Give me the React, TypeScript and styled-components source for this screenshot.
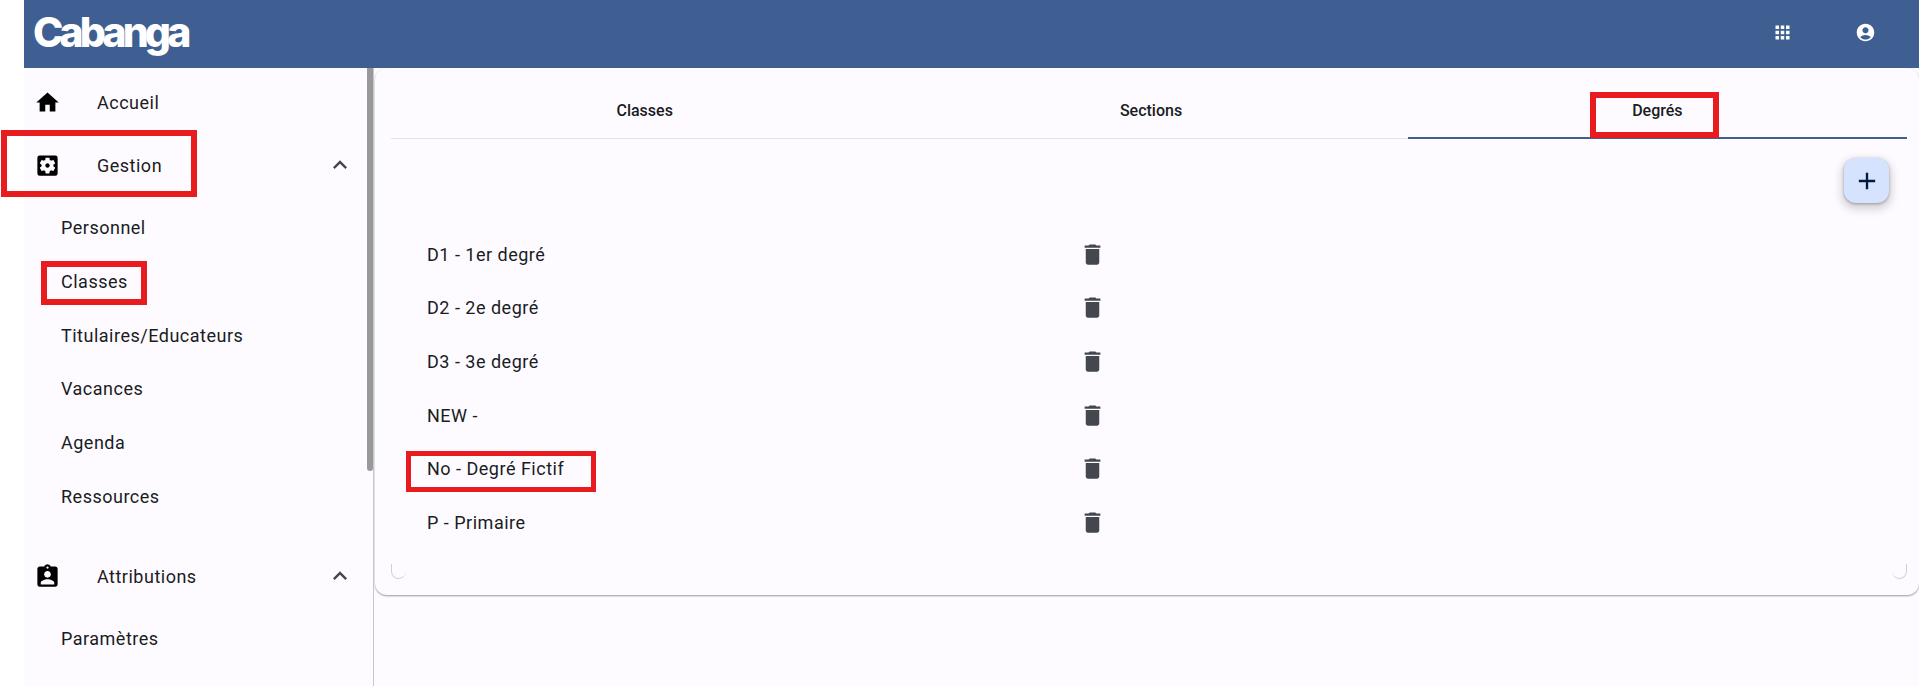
import React from "react";
import styled, { createGlobalStyle } from "styled-components";
import { MdHome, MdSettingsApplications, MdAssignmentInd, MdApps, MdAccountCircle, MdDelete, MdExpandLess, MdAdd } from "react-icons/md";

const Global = createGlobalStyle`
  html, body { margin: 0; padding: 0; background: #fff; height: 686px; overflow: hidden; }
  body { font-family: Roboto, "Liberation Sans", sans-serif; }
  * { box-sizing: border-box; }
`;
const Page = styled.div`
  position: relative; width: 1919px; height: 686px; padding-left: 24px; overflow: hidden;
  display: flex; flex-direction: column;
`;
const Header = styled.header`
  height: 68px; flex: none; background: #3f5f92; display: flex; align-items: center; padding-left: 9px; color: #fff;
`;
const Logo = styled.div`
  font-family: Inter, sans-serif; font-weight: 800; font-size: 41px; letter-spacing: -3.9px; line-height: 68px; margin-top: -5px;
`;
const HeaderIcons = styled.div`
  margin-left: auto; display: flex; align-items: center; gap: 62px; padding-right: 43px; margin-top: -4px;
  svg { display: block; width: 21px; height: 21px; }
`;
const Body = styled.div`
  flex: 1; display: flex; min-height: 0; background: #fdfbff;
`;
const Sidebar = styled.nav`
  position: relative; width: 350px; flex: none; border-right: 1px solid #c4c6cf; padding-top: 3.5px; overflow: hidden; color: #1a1c1e;
`;
const Thumb = styled.div`
  position: absolute; right: 0; top: 0; width: 6px; height: 403px; background: #999; border-radius: 0 0 3px 3px;
`;
const MainItem = styled.div`
  height: 62.6px; display: flex; align-items: center; padding-left: 10px; font-size: 18px; letter-spacing: .5px;
  & > svg:first-child { width: 27px; height: 27px; color: #000; margin-right: 36px; flex: none; }
`;
const Chevron = styled(MdExpandLess)`
  margin-left: auto; margin-right: 19px; width: 28px; height: 28px; color: #44474e;
`;
const SubList = styled.div<{ $after?: number }>`
  margin-top: 4.4px; margin-bottom: ${p => p.$after ?? 0}px;
`;
const SubItem = styled.div`
  height: 53.7px; display: flex; align-items: center; padding-left: 37px; font-size: 18px; letter-spacing: .5px;
`;
const Main = styled.main`
  flex: 1; min-width: 0; padding-right: 0;
`;
const Card = styled.section`
  height: 527px; margin-left: 1px; border-radius: 12px; background: #fdfbff; padding: 0 12px 16px 16px;
  box-shadow: 0 1px 2px rgba(0,0,0,.4);
  display: flex; flex-direction: column;
`;
const Tabs = styled.div`
  height: 71px; flex: none; display: grid; grid-template-columns: repeat(3, 1fr); column-gap: 7px; padding-left: 4px;
  border-bottom: 1px solid #e0e2ec;
`;
const Tab = styled.div<{ $active?: boolean }>`
  display: flex; align-items: center; justify-content: center; height: 71px; padding-top: 16px;
  font-size: 16px; font-weight: 500; color: #1a1c1e;
  border-bottom: 2px solid ${p => (p.$active ? "#3f5f92" : "transparent")};
`;
const Panel = styled.div`
  flex: 1; border-radius: 12px; position: relative; padding: 87.5px 35px 0;
  border: 1px solid transparent;
  &::before, &::after { content: ""; position: absolute; bottom: -1px; width: 14px; height: 14px; border-bottom: 1px solid #cfd0d6; border-radius: 0 0 12px 12px; }
  &::before { left: -1px; border-left: 1px solid #cfd0d6; }
  &::after { right: -1px; border-right: 1px solid #cfd0d6; }
`;
const Fab = styled.button`
  position: absolute; top: 18px; right: 17px; width: 45px; height: 45px; border: 0; padding: 0; border-radius: 12px;
  background: #d6e3ff; color: #001b3e; display: flex; align-items: center; justify-content: center;
  box-shadow: 0 4px 8px 3px rgba(0,0,0,.15), 0 1px 3px rgba(0,0,0,.3);
  svg { width: 28px; height: 28px; }
`;
const Row = styled.div`
  height: 53.6px; display: grid; grid-template-columns: 652px 27px; align-items: center;
  font-size: 18px; letter-spacing: .5px; color: #1a1c1e;
  svg { width: 27px; height: 27px; color: #44474e; display: block; }
`;
const Mark = styled.div<{ $x: number; $y: number; $w: number; $h: number; $b: number }>`
  position: absolute; left: ${p => p.$x}px; top: ${p => p.$y}px; width: ${p => p.$w}px; height: ${p => p.$h}px;
  border: ${p => p.$b}px solid #e81c1f; pointer-events: none;
`;

const subs1 = ["Personnel", "Classes", "Titulaires/Educateurs", "Vacances", "Agenda", "Ressources"];
const rows = ["D1 - 1er degré", "D2 - 2e degré", "D3 - 3e degré", "NEW -", "No - Degré Fictif", "P - Primaire"];

export default function App() {
  return (
    <Page>
      <Global />
      <Header>
        <Logo>Cabanga</Logo>
        <HeaderIcons><MdApps /><MdAccountCircle /></HeaderIcons>
      </Header>
      <Body>
        <Sidebar>
          <Thumb />
          <MainItem><MdHome />Accueil</MainItem>
          <MainItem><MdSettingsApplications />Gestion<Chevron /></MainItem>
          <SubList $after={21.6}>{subs1.map(s => <SubItem key={s}>{s}</SubItem>)}</SubList>
          <MainItem><MdAssignmentInd />Attributions<Chevron /></MainItem>
          <SubList><SubItem>Paramètres</SubItem></SubList>
        </Sidebar>
        <Main>
          <Card>
            <Tabs>
              <Tab>Classes</Tab>
              <Tab>Sections</Tab>
              <Tab $active>Degrés</Tab>
            </Tabs>
            <Panel>
              <Fab aria-label="Ajouter"><MdAdd /></Fab>
              {rows.map(r => <Row key={r}><span>{r}</span><MdDelete /></Row>)}
            </Panel>
          </Card>
        </Main>
      </Body>
      <Mark $x={1} $y={130} $w={196} $h={67} $b={6} />
      <Mark $x={41} $y={261} $w={106} $h={44} $b={6} />
      <Mark $x={1590} $y={92} $w={129} $h={46} $b={6} />
      <Mark $x={406} $y={451} $w={190} $h={41} $b={5} />
    </Page>
  );
}
